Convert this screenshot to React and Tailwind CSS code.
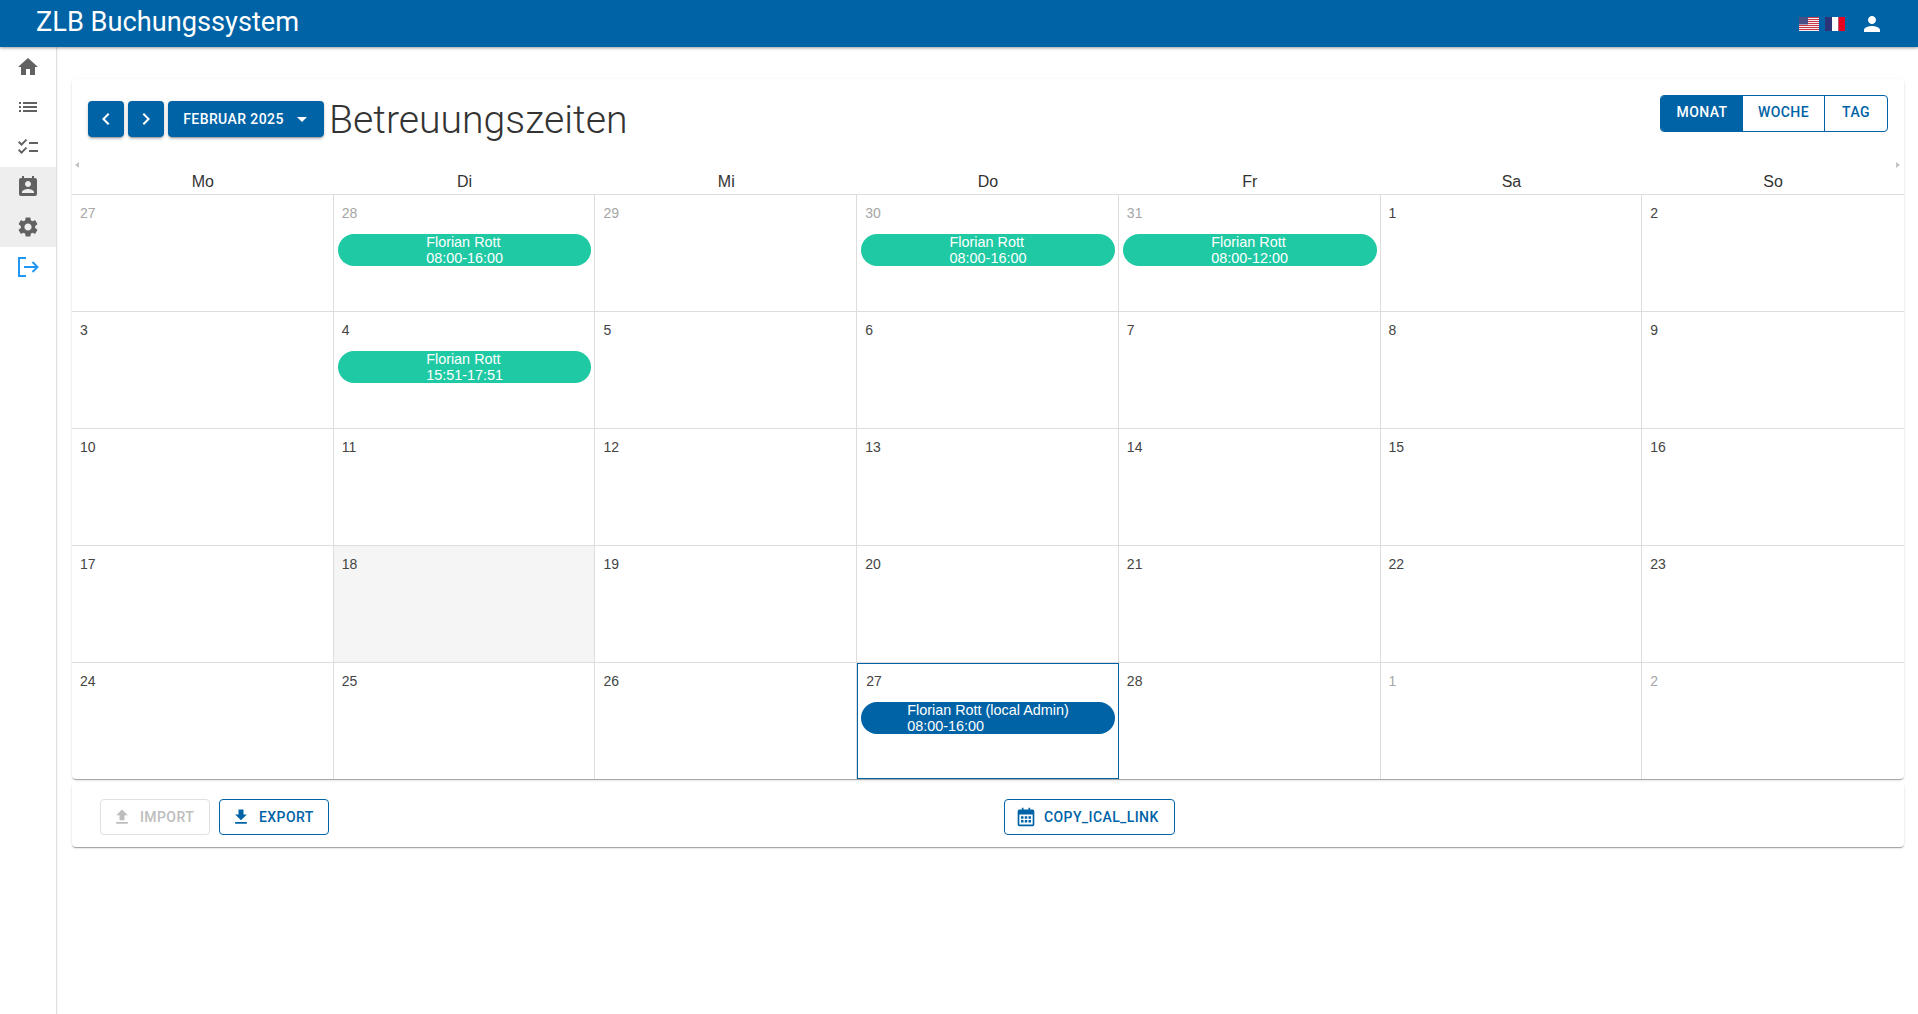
import React from 'react';

const Icon = ({ d, size = 24, className = '' }) => (
  <svg viewBox="0 0 24 24" width={size} height={size} fill="currentColor" className={className}>
    <path d={d} />
  </svg>
);

const paths = {
  home: 'M10 20v-6h4v6h5v-8h3L12 3 2 12h3v8z',
  list: 'M3 13h2v-2H3v2zm0 4h2v-2H3v2zm0-8h2V7H3v2zm4 4h14v-2H7v2zm0 4h14v-2H7v2zM7 7v2h14V7H7z',
  checklist: 'M22 7h-9v2h9V7zm0 8h-9v2h9v-2zM5.54 11 2 7.46l1.41-1.41 2.12 2.12 4.24-4.24 1.41 1.41L5.54 11zm0 8L2 15.46l1.41-1.41 2.12 2.12 4.24-4.24 1.41 1.41L5.54 19z',
  contact: 'M19 3h-1V1h-2v2H8V1H6v2H5c-1.11 0-2 .9-2 2v14c0 1.1.89 2 2 2h14c1.1 0 2-.9 2-2V5c0-1.1-.9-2-2-2zm-7 3c1.66 0 3 1.34 3 3s-1.34 3-3 3-3-1.34-3-3 1.34-3 3-3zm6 12H6v-1c0-2 4-3.1 6-3.1s6 1.1 6 3.1v1z',
  settings: 'M19.14 12.94c.04-.3.06-.61.06-.94 0-.32-.02-.64-.07-.94l2.03-1.58c.18-.14.23-.41.12-.61l-1.92-3.32c-.12-.22-.37-.29-.59-.22l-2.39.96c-.5-.38-1.03-.7-1.62-.94l-.36-2.54c-.04-.24-.24-.41-.48-.41h-3.84c-.24 0-.43.17-.47.41l-.36 2.54c-.59.24-1.13.57-1.62.94l-2.39-.96c-.22-.08-.47 0-.59.22L2.74 8.87c-.12.21-.08.47.12.61l2.03 1.58c-.05.3-.09.63-.09.94s.02.64.07.94l-2.03 1.58c-.18.14-.23.41-.12.61l1.92 3.32c.12.22.37.29.59.22l2.39-.96c.5.38 1.03.7 1.62.94l.36 2.54c.05.24.24.41.48.41h3.84c.24 0 .44-.17.47-.41l.36-2.54c.59-.24 1.13-.56 1.62-.94l2.39.96c.22.08.47 0 .59-.22l1.92-3.32c.12-.22.07-.47-.12-.61l-2.01-1.58zM12 15.6c-1.98 0-3.6-1.62-3.6-3.6s1.62-3.6 3.6-3.6 3.6 1.62 3.6 3.6-1.62 3.6-3.6 3.6z',
  person: 'M12 12c2.21 0 4-1.79 4-4s-1.79-4-4-4-4 1.79-4 4 1.79 4 4 4zm0 2c-2.67 0-8 1.34-8 4v2h16v-2c0-2.66-5.33-4-8-4z',
  upload: 'M5 20h14v-2H5v2zm0-10h4v6h6v-6h4l-7-7-7 7z',
  download: 'M5 20h14v-2H5v2zM19 9h-4V3H9v6H5l7 7 7-7z',
  prev: 'M15.41 7.41 14 6l-6 6 6 6 1.41-1.41L10.83 12z',
  next: 'M10 6 8.59 7.41 13.17 12l-4.58 4.59L10 18l6-6z',
  drop: 'm7 10 5 5 5-5z',
};

const CalendarIcon = () => (
  <svg viewBox="0 0 24 24" width="20" height="20" fill="currentColor">
    <path d="M7 1h2v3H7zM15 1h2v3h-2z" />
    <path d="M4 3h16a2 2 0 0 1 2 2v16a2 2 0 0 1-2 2H4a2 2 0 0 1-2-2V5a2 2 0 0 1 2-2zm0 6v12h16V9H4z" />
    <path d="M6 11h3v3H6zM10.500 11h3v3h-3zM15 11h3v3h-3zM6 15.500h3v3H6zM10.500 15.500h3v3h-3zM15 15.500h3v3h-3z" />
  </svg>
);

const UsFlag = () => (
  <svg viewBox="0 0 20 14" width="20" height="14">
    <rect width="20" height="14" fill="#fff" />
    {[0, 2, 4, 6, 8, 10, 12].map((y) => (
      <rect key={y} y={y} width="20" height="1.1" fill="#c8394a" />
    ))}
    <rect width="9" height="7.500" fill="#4a4f86" />
  </svg>
);

const FrFlag = () => (
  <svg viewBox="0 0 20 14" width="20" height="14">
    <rect width="7" height="14" fill="#2c3377" />
    <rect x="7" width="6.500" height="14" fill="#fff" />
    <rect x="13.500" width="6.500" height="14" fill="#e8001c" />
  </svg>
);

const LogoutIcon = () => (
  <svg viewBox="0 0 24 24" width="24" height="24" fill="none" stroke="#2196f3" strokeWidth="2">
    <path d="M10 3H3v18h7" />
    <path d="M8 12h13" />
    <path d="M16.500 7l5 5-5 5" />
  </svg>
);

const navItems = [
  { icon: paths.home },
  { icon: paths.list },
  { icon: paths.checklist },
  { icon: paths.contact, active: true },
  { icon: paths.settings, active: true },
];

const days = ['Mo', 'Di', 'Mi', 'Do', 'Fr', 'Sa', 'So'];

const weeks = [
  [
    { n: 27, muted: true },
    { n: 28, muted: true, ev: ['Florian Rott', '08:00-16:00'] },
    { n: 29, muted: true },
    { n: 30, muted: true, ev: ['Florian Rott', '08:00-16:00'] },
    { n: 31, muted: true, ev: ['Florian Rott', '08:00-12:00'] },
    { n: 1 },
    { n: 2 },
  ],
  [
    { n: 3 },
    { n: 4, ev: ['Florian Rott', '15:51-17:51'] },
    { n: 5 },
    { n: 6 },
    { n: 7 },
    { n: 8 },
    { n: 9 },
  ],
  [{ n: 10 }, { n: 11 }, { n: 12 }, { n: 13 }, { n: 14 }, { n: 15 }, { n: 16 }],
  [{ n: 17 }, { n: 18, today: true }, { n: 19 }, { n: 20 }, { n: 21 }, { n: 22 }, { n: 23 }],
  [
    { n: 24 },
    { n: 25 },
    { n: 26 },
    { n: 27, selected: true, ev: ['Florian Rott (local Admin)', '08:00-16:00'], blue: true },
    { n: 28 },
    { n: 1, muted: true },
    { n: 2, muted: true },
  ],
];

const EventPill = ({ lines, blue }) => (
  <div className={`mr-[3px] mt-[13px] h-8 rounded-2xl text-center text-[14.400px] leading-4 text-white ${blue ? 'ml-[3px] bg-[#0063a6]' : 'ml-1 bg-[#1fc9a3]'}`}>
    <div className="inline-block text-left">
      <div>{lines[0]}</div>
      <div>{lines[1]}</div>
    </div>
  </div>
);

const DayCell = ({ day, lastCol, lastRow }) => {
  const border = day.selected
    ? 'border border-[#0063a6]'
    : `border-[#ddd] ${lastCol ? '' : 'border-r'} ${lastRow ? '' : 'border-b'}`;
  return (
    <div className={`min-w-0 ${lastRow ? 'h-[116px]' : 'h-[117px]'} ${border} ${day.today ? 'bg-[#f5f5f5]' : ''}`}>
      <div className={`pl-2 text-sm leading-4 ${day.selected ? 'pt-[9px]' : 'pt-[10px]'} ${day.muted ? 'text-[#a6a6a6]' : 'text-[#444]'}`}>{day.n}</div>
      {day.ev && <EventPill lines={day.ev} blue={day.blue} />}
    </div>
  );
};

const OutlineButton = ({ icon, children, disabled, className = '' }) => (
  <button
    className={`flex h-9 items-center gap-2 rounded border px-[11px] text-sm font-medium tracking-[0.4px] ${
      disabled ? 'border-[#e0e0e0] text-[#bdbdbd]' : 'border-[#0063a6] text-[#0063a6]'
    } ${className}`}
  >
    {icon}
    {children}
  </button>
);

const BlueButton = ({ children, className = '' }) => (
  <button className={`flex h-9 items-center justify-center rounded bg-[#0063a6] text-sm font-medium tracking-[0.4px] text-white shadow-[0_3px_1px_-2px_rgba(0,0,0,0.2),0_2px_2px_0_rgba(0,0,0,0.14),0_1px_5px_0_rgba(0,0,0,0.12)] ${className}`}>
    {children}
  </button>
);

const cardShadow = 'shadow-[0_2px_1px_-1px_rgba(0,0,0,0.2),0_1px_1px_0_rgba(0,0,0,0.14),0_1px_3px_0_rgba(0,0,0,0.12)]';

export default function App() {
  return (
    <div className="flex h-[1014px] flex-col overflow-hidden bg-white font-['Roboto',sans-serif] text-[#333]">
      {/* App bar */}
      <header className="z-10 flex h-[47px] shrink-0 items-center justify-between bg-[#0063a6] pl-9 pr-[34px] text-white shadow-[0_1px_3px_rgba(0,0,0,0.4)]">
        <h1 className="pb-[2px] text-[27.200px] font-normal leading-none">ZLB Buchungssystem</h1>
        <div className="flex items-center">
          <UsFlag />
          <span className="ml-[6px]"><FrFlag /></span>
          <span className="ml-[15px]"><Icon d={paths.person} size={24} /></span>
        </div>
      </header>

      <div className="flex flex-1">
        {/* Sidebar */}
        <aside className="w-[57px] shrink-0 border-r border-[#e0e0e0] shadow-[1px_0_2px_rgba(0,0,0,0.05)]">
          {navItems.map((item, i) => (
            <div key={i} className={`flex h-10 items-center justify-center text-[#616161] ${item.active ? 'bg-[#eeeeee]' : ''}`}>
              <Icon d={item.icon} />
            </div>
          ))}
          <div className="flex h-10 items-center justify-center">
            <LogoutIcon />
          </div>
        </aside>

        <main className="w-[1847px] pl-[15px] pt-8">
          {/* Calendar card */}
          <section className={`relative w-[1832px] rounded ${cardShadow}`}>
            <div className="flex h-[83px] items-start justify-between pl-4 pr-4">
              <div className="flex items-center gap-1 pt-[21px]">
                <BlueButton className="w-9"><Icon d={paths.prev} /></BlueButton>
                <BlueButton className="w-9"><Icon d={paths.next} /></BlueButton>
                <BlueButton className="w-[156px] gap-[6px] pl-[5px]">
                  FEBRUAR 2025
                  <Icon d={paths.drop} />
                </BlueButton>
                <h2 className="ml-px pt-[2px] text-[39.200px] font-light leading-9">Betreuungszeiten</h2>
              </div>
              <div className="mt-4 flex h-[37px] overflow-hidden rounded border border-[#0063a6] text-sm font-medium tracking-[0.4px] text-[#0063a6]">
                <div className="flex w-[82px] items-center justify-center bg-[#0063a6] pb-[3px] text-white">MONAT</div>
                <div className="flex w-[82px] items-center justify-center border-r border-[#0063a6] pb-[3px]">WOCHE</div>
                <div className="flex w-[62px] items-center justify-center pb-[3px]">TAG</div>
              </div>
            </div>

            {/* small scroll arrows */}
            <div className="absolute left-[3px] top-[83px] h-0 w-0 border-y-[3px] border-r-[4px] border-y-transparent border-r-[#c4c4c4]" />
            <div className="absolute right-[4px] top-[83px] h-0 w-0 border-y-[3px] border-l-[4px] border-y-transparent border-l-[#c4c4c4]" />

            <div className="grid grid-cols-7 border-b border-[#ddd] pb-[2px] pt-[10px] text-center font-['Liberation_Sans',sans-serif] text-base leading-5">
              {days.map((d) => (
                <div key={d}>{d}</div>
              ))}
            </div>
            <div className="grid grid-cols-7 font-['Liberation_Sans',sans-serif]">
              {weeks.flatMap((week, w) =>
                week.map((day, i) => (
                  <DayCell key={`${w}-${i}`} day={day} lastCol={i === 6} lastRow={w === weeks.length - 1} />
                ))
              )}
            </div>
          </section>

          {/* Footer card */}
          <section className={`mt-1 flex h-[64px] w-[1832px] items-start rounded pl-7 pt-4 ${cardShadow}`}>
            <OutlineButton icon={<Icon d={paths.upload} size={20} />} disabled className="w-[110px]">IMPORT</OutlineButton>
            <OutlineButton icon={<Icon d={paths.download} size={20} />} className="ml-[9px] w-[110px]">EXPORT</OutlineButton>
            <OutlineButton icon={<CalendarIcon />} className="ml-[675px] w-[171px]">COPY_ICAL_LINK</OutlineButton>
          </section>
        </main>
      </div>
    </div>
  );
}
